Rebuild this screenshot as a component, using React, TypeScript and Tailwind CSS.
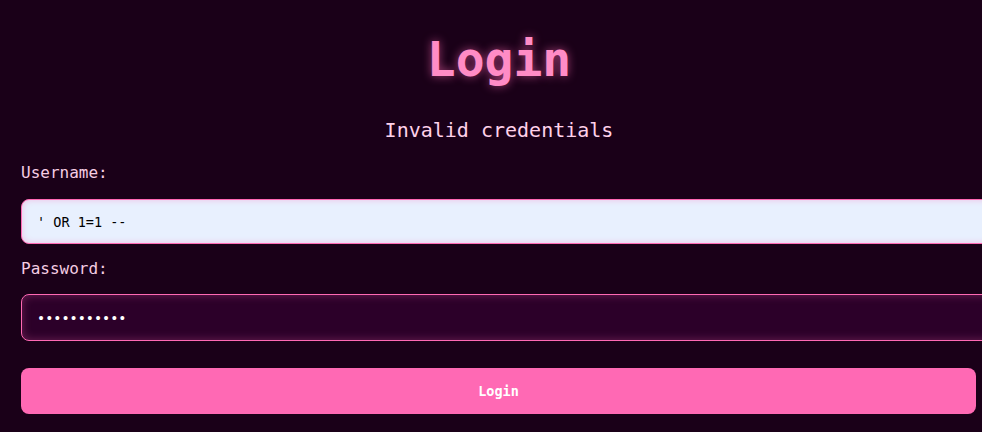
import { useState } from "react";

export default function App() {
  const [username, setUsername] = useState("' OR 1=1 --");
  const [password, setPassword] = useState("hunter2hunt");

  return (
    <div
      className="min-h-screen w-full overflow-hidden bg-[#1a0018] px-[21px] pt-[31px]"
      style={{ fontFamily: '"DejaVu Sans Mono", "Liberation Mono", monospace' }}
    >
      <div className="w-[956px]">
        <h1 className="text-center text-[48px] font-bold leading-[56px] text-[#ff8cc6] [text-shadow:0_0_10px_rgba(255,105,180,0.6)]">
          Login
        </h1>

        <p className="mt-[31px] text-center text-[20px] leading-[24px] text-[#ffd1ea]">
          Invalid credentials
        </p>

        <form
          className="mt-[21px] flex flex-col"
          onSubmit={(e) => e.preventDefault()}
        >
          <label className="text-[16px] leading-[20px] text-[#f5cde3]">Username:</label>
          <input
            value={username}
            onChange={(e) => setUsername(e.target.value)}
            className="mt-[16px] h-[45px] w-[1000px] rounded-[8px] border border-[#ff69b4] bg-[#e8f0fe] px-[15px] text-[13.5px] text-black outline-none shadow-[inset_0_0_6px_rgba(255,105,180,0.35)]"
          />

          <label className="mt-[15px] text-[16px] leading-[20px] text-[#f5cde3]">Password:</label>
          <input
            type="password"
            value={password}
            onChange={(e) => setPassword(e.target.value)}
            className="mt-[15px] h-[47px] w-[1000px] rounded-[8px] border border-[#ff69b4] bg-[#2c0029] px-[15px] text-[13.5px] text-white outline-none shadow-[inset_0_0_10px_rgba(255,105,180,0.3)]"
          />

          <button
            type="submit"
            className="mt-[27px] h-[46px] w-[955px] rounded-[8px] bg-[#ff69b4] text-[13.5px] font-bold text-white"
          >
            Login
          </button>
        </form>
      </div>
    </div>
  );
}
